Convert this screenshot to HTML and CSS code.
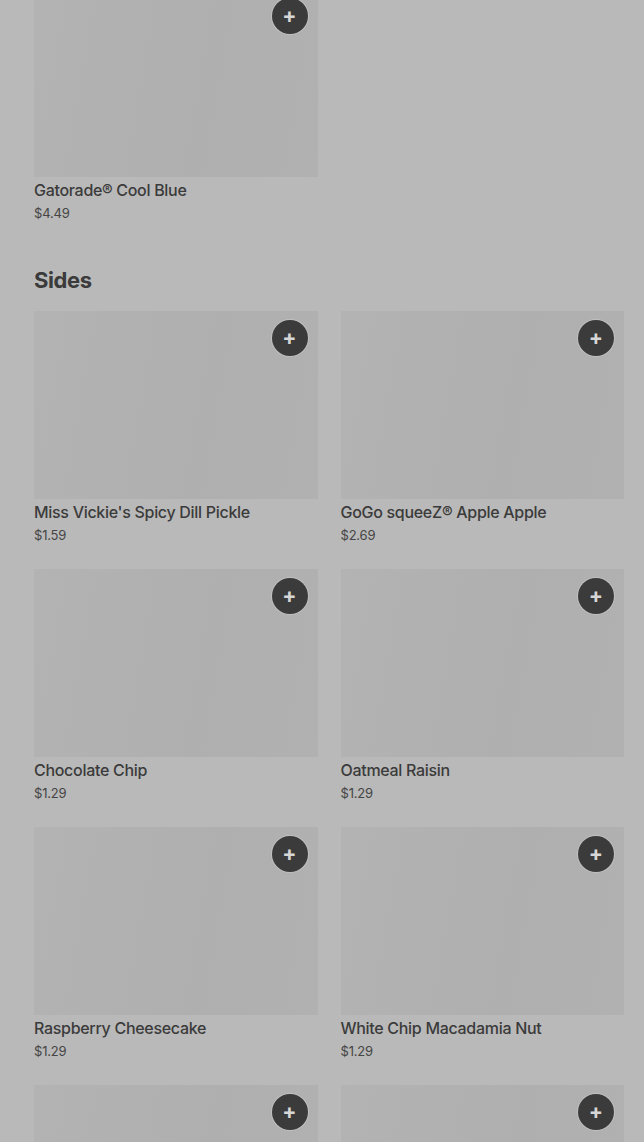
FILE: index.html
```html
<!DOCTYPE html>
<html lang="en">
<head>
    <meta charset="UTF-8">
    <meta name="viewport" content="width=device-width, initial-scale=1.0">
    <title>Menu</title>
    <link rel="stylesheet" href="styles.css">
</head>
<body>
    <div class="menu">
        <div class="section section-first">
            <div class="item-grid">
                <div class="item">
                    <div class="item-image">
                        <button class="add-button">+</button>
                    </div>
                    <div class="item-name">Gatorade® Cool Blue</div>
                    <div class="item-price">$4.49</div>
                </div>
            </div>
        </div>

        <div class="section">
            <h2>Sides</h2>
            <div class="item-grid">
                <div class="item">
                    <div class="item-image"><button class="add-button">+</button></div>
                    <div class="item-name">Miss Vickie's Spicy Dill Pickle</div>
                    <div class="item-price">$1.59</div>
                </div>
                <div class="item">
                    <div class="item-image"><button class="add-button">+</button></div>
                    <div class="item-name">GoGo squeeZ® Apple Apple</div>
                    <div class="item-price">$2.69</div>
                </div>
                <div class="item">
                    <div class="item-image"><button class="add-button">+</button></div>
                    <div class="item-name">Chocolate Chip</div>
                    <div class="item-price">$1.29</div>
                </div>
                <div class="item">
                    <div class="item-image"><button class="add-button">+</button></div>
                    <div class="item-name">Oatmeal Raisin</div>
                    <div class="item-price">$1.29</div>
                </div>
                <div class="item">
                    <div class="item-image"><button class="add-button">+</button></div>
                    <div class="item-name">Raspberry Cheesecake</div>
                    <div class="item-price">$1.29</div>
                </div>
                <div class="item">
                    <div class="item-image"><button class="add-button">+</button></div>
                    <div class="item-name">White Chip Macadamia Nut</div>
                    <div class="item-price">$1.29</div>
                </div>
                <div class="item">
                    <div class="item-image"><button class="add-button">+</button></div>
                </div>
                <div class="item">
                    <div class="item-image"><button class="add-button">+</button></div>
                </div>
            </div>
        </div>
    </div>
</body>
</html>
```

FILE: styles.css
```css
body {
    font-family: 'Inter', 'Liberation Sans', sans-serif;
    background-color: #b9b9b9;
    color: #3b3b3b;
    margin: 0;
    overflow: hidden;
}

.menu {
    padding: 0 20px 0 34px;
}

.section-first {
    margin-top: -11px;
}

.section h2 {
    font-size: 22px;
    font-weight: 700;
    letter-spacing: -0.4px;
    margin: 19px 0 17px;
    line-height: 28px;
}

.item-grid {
    display: grid;
    grid-template-columns: 1fr 1fr;
    column-gap: 23px;
}

.item {
    height: 258px;
}

.item-image {
    position: relative;
    height: 188px;
    background: linear-gradient(100deg, #b3b3b3 0%, #afafaf 60%, #b1b1b1 100%);
}

.add-button {
    position: absolute;
    top: 9px;
    right: 10px;
    width: 36px;
    height: 36px;
    border-radius: 50%;
    border: none;
    background: #3b3b3b;
    color: #d6d6d6;
    font-family: 'Inter', sans-serif;
    font-size: 21px;
    font-weight: 700;
    line-height: 36px;
    padding: 0 0 2px;
    box-shadow: 0 0 0 1px rgba(255, 255, 255, 0.2);
}

.item-name {
    font-size: 16px;
    font-weight: 500;
    letter-spacing: -0.3px;
    line-height: 20px;
    margin-top: 3px;
}

.item-price {
    font-size: 13px;
    color: #454545;
    letter-spacing: -0.2px;
    line-height: 18px;
    margin-top: 4px;
}
```
